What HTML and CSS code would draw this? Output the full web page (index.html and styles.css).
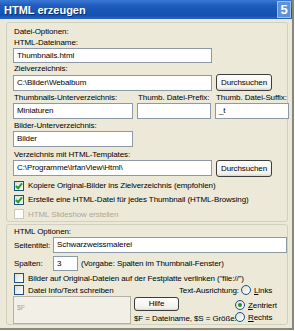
FILE: index.html
```html
<!DOCTYPE html>
<html>
    <head>
        <meta charset="UTF-8">
        <title>HTML erzeugen</title>
        <link rel="stylesheet" href="styles.css">
    </head>
    <body>
        <div class="window">
            <div class="titlebar">
                <span class="title">HTML erzeugen</span>
                <span class="step">5</span>
            </div>
            <div class="client">
                <div class="group group-file">
                    <div class="legend">Datei-Optionen:</div>
                    <div class="label">HTML-Dateiname:</div>
                    <div class="field w-long">Thumbnails.html</div>
                    <div class="label">Zielverzeichnis:</div>
                    <div class="row">
                        <div class="field w-long">C:\Bilder\Webalbum</div>
                        <div class="btn browse">Durchsuchen</div>
                    </div>
                    <div class="cols3">
                        <div class="label">Thumbnails-Unterverzeichnis:</div>
                        <div class="label">Thumb. Datei-Prefix:</div>
                        <div class="label">Thumb. Datei-Suffix:</div>
                        <div class="field">Miniaturen</div>
                        <div class="field"></div>
                        <div class="field">_t</div>
                    </div>
                    <div class="label">Bilder-Unterverzeichnis:</div>
                    <div class="field w-mid">Bilder</div>
                    <div class="label gap">Verzeichnis mit HTML-Templates:</div>
                    <div class="row">
                        <div class="field w-long">C:\Programme\IrfanView\Html\</div>
                        <div class="btn browse">Durchsuchen</div>
                    </div>
                    <div class="check first"><span class="box on"></span>Kopiere Original-Bilder ins Zielverzeichnis (empfohlen)</div>
                    <div class="check"><span class="box on"></span>Erstelle eine HTML-Datei für jedes Thumbnail (HTML-Browsing)</div>
                    <div class="check disabled"><span class="box"></span>HTML Slideshow erstellen</div>
                </div>

                <div class="group group-html">
                    <div class="legend">HTML Optionen:</div>
                    <div class="row inline">
                        <span class="inline-label">Seitentitel:</span>
                        <div class="field w-title">Schwarzweissmalerei</div>
                    </div>
                    <div class="row inline spalten">
                        <span class="inline-label">Spalten:</span>
                        <div class="field w-num">3</div>
                        <span class="hint">(Vorgabe: Spalten im Thumbnail-Fenster)</span>
                    </div>
                    <div class="check link"><span class="box"></span>Bilder auf Original-Dateien auf der Festplatte verlinken ("file://")</div>
                    <div class="info-head">
                        <div class="check"><span class="box"></span>Datei Info/Text schreiben</div>
                        <span class="align-label">Text-Ausrichtung:</span>
                        <span class="radio"><span class="dot"></span><u>L</u>inks</span>
                    </div>
                    <div class="info">
                        <div class="field area">$F</div>
                        <div class="help">
                            <div class="btn hilfe">Hilfe</div>
                            <div class="legend-text">$F = Dateiname, $S = Größe...</div>
                        </div>
                        <div class="radios">
                            <span class="radio"><span class="dot on"></span><u>Z</u>entriert</span>
                            <span class="radio"><span class="dot"></span><u>R</u>echts</span>
                        </div>
                    </div>
                </div>
            </div>
        </div>
    </body>
</html>
```

FILE: styles.css
```css
body{
    margin: 0;
    padding: 0;
    font-family: "Liberation Sans", Arial, sans-serif;
    font-size: 8px;
    letter-spacing: -0.1px;
    color: #000;
    background: #fff;
}
.window{
    width: 294px;
    height: 330px;
    box-sizing: border-box;
    background: #ece9d8;
    border-right: 2px solid #8a8775;
    border-bottom: 2px solid #8a8775;
    display: flex;
    flex-direction: column;
    overflow: hidden;
}
.titlebar{
    height: 19px;
    flex: none;
    background: linear-gradient(#3a78d4, #1d5cbd 30%, #1452b0 80%, #2a66c0);
    display: flex;
    align-items: center;
    justify-content: space-between;
    padding-left: 4px;
}
.title{
    color: #fff;
    font-weight: bold;
    font-size: 11px;
    letter-spacing: 0;
    text-shadow: 1px 1px 0 #0a2f70;
}
.step{
    width: 12px;
    height: 15px;
    margin-right: 1px;
    background: #5d91d8;
    border: 1px solid #9cc0ee;
    color: #fff;
    font-weight: bold;
    font-size: 13px;
    letter-spacing: 0;
    line-height: 15px;
    text-align: center;
}
.client{
    flex: 1;
    padding: 3px 4px 0 6px;
    display: flex;
    flex-direction: column;
    gap: 2px;
}
.group{
    border: 1px solid #d0d0bf;
    border-radius: 3px;
    padding: 3px 0 0 6px;
    display: flex;
    flex-direction: column;
    box-sizing: border-box;
}
.group-file{
    height: 200px;
}
.group-html{
    height: 101px;
    padding-top: 1px;
    overflow: hidden;
}
.legend, .label{
    line-height: 11px;
    padding-left: 1px;
    white-space: nowrap;
}
.label.gap{
    margin-top: 2px;
}
.field{
    height: 16px;
    box-sizing: border-box;
    background: #fff;
    border: 1px solid #8c99a6;
    padding: 0 3px;
    line-height: 14px;
    white-space: nowrap;
    overflow: hidden;
}
.w-long{
    width: 199px;
}
.w-mid{
    width: 120px;
}
.row{
    display: flex;
    align-items: center;
    gap: 4px;
}
.row + .label, .cols3 + .label{
    margin-top: 1px;
}
.cols3{
    margin-top: 1px;
    display: grid;
    grid-template-columns: 120px 74px 74px;
    column-gap: 4px;
}
.btn{
    box-sizing: border-box;
    border: 1px solid #3d3d3d;
    border-radius: 3px;
    background: linear-gradient(#fefefe, #f1f0ea 85%, #d8d4c6);
    text-align: center;
    white-space: nowrap;
}
.browse{
    width: 56px;
    height: 17px;
    line-height: 15px;
}
.check{
    display: flex;
    align-items: center;
    height: 14px;
    white-space: nowrap;
    padding-left: 1px;
}
.check.first{
    margin-top: 2px;
}
.check + .check{
    margin-top: 1px;
}
.box{
    width: 8px;
    height: 8px;
    border: 1px solid #1c5180;
    background: linear-gradient(135deg, #dcdcd7, #fff);
    margin-right: 4px;
    position: relative;
    flex: none;
}
.box.on::after{
    content: "";
    position: absolute;
    left: 2px;
    top: 0;
    width: 2px;
    height: 5px;
    border: solid #21a121;
    border-width: 0 2px 2px 0;
    transform: rotate(40deg);
}
.check.disabled{
    color: #aca899;
}
.check.disabled .box{
    border-color: #cac8bb;
    background: #fff;
}
.inline{
    height: 16px;
    gap: 3px;
}
.spalten{
    margin-top: 3px;
    height: 15px;
}
.spalten .field{
    height: 15px;
}
.inline-label{
    width: 36px;
    padding-left: 1px;
}
.w-title{
    width: 236px;
}
.w-num{
    width: 25px;
}
.hint{
    white-space: nowrap;
}
.check.link{
    height: 12px;
    margin-top: 1px;
}
.info-head{
    display: flex;
    align-items: center;
    height: 12px;
}
.info-head .check{
    height: 12px;
}
.align-label{
    margin-left: auto;
    margin-right: 2px;
    white-space: nowrap;
}
.info{
    display: flex;
    align-items: flex-start;
}
.area{
    width: 118px;
    height: 28px;
    background: #f1efe6;
    color: #aca899;
    border-color: #b4b2a6;
    margin-right: 3px;
    line-height: 22px;
    font-size: 7px;
}
.help{
    width: 101px;
    display: flex;
    flex-direction: column;
}
.hilfe{
    width: 45px;
    height: 14px;
    margin-top: 1px;
    line-height: 12px;
}
.legend-text{
    line-height: 11px;
    margin-top: 2px;
    white-space: nowrap;
}
.radios{
    display: flex;
    flex-direction: column;
    padding-top: 3px;
}
.radio{
    display: flex;
    align-items: center;
    width: 46px;
    height: 12px;
    white-space: nowrap;
}
.dot{
    width: 8px;
    height: 8px;
    border-radius: 50%;
    border: 1px solid #1c5180;
    background: linear-gradient(135deg, #dcdcd7, #fff);
    margin-right: 3px;
    position: relative;
    flex: none;
}
.dot.on::after{
    content: "";
    position: absolute;
    left: 2px;
    top: 2px;
    width: 4px;
    height: 4px;
    border-radius: 50%;
    background: #2f8a2f;
}
```
